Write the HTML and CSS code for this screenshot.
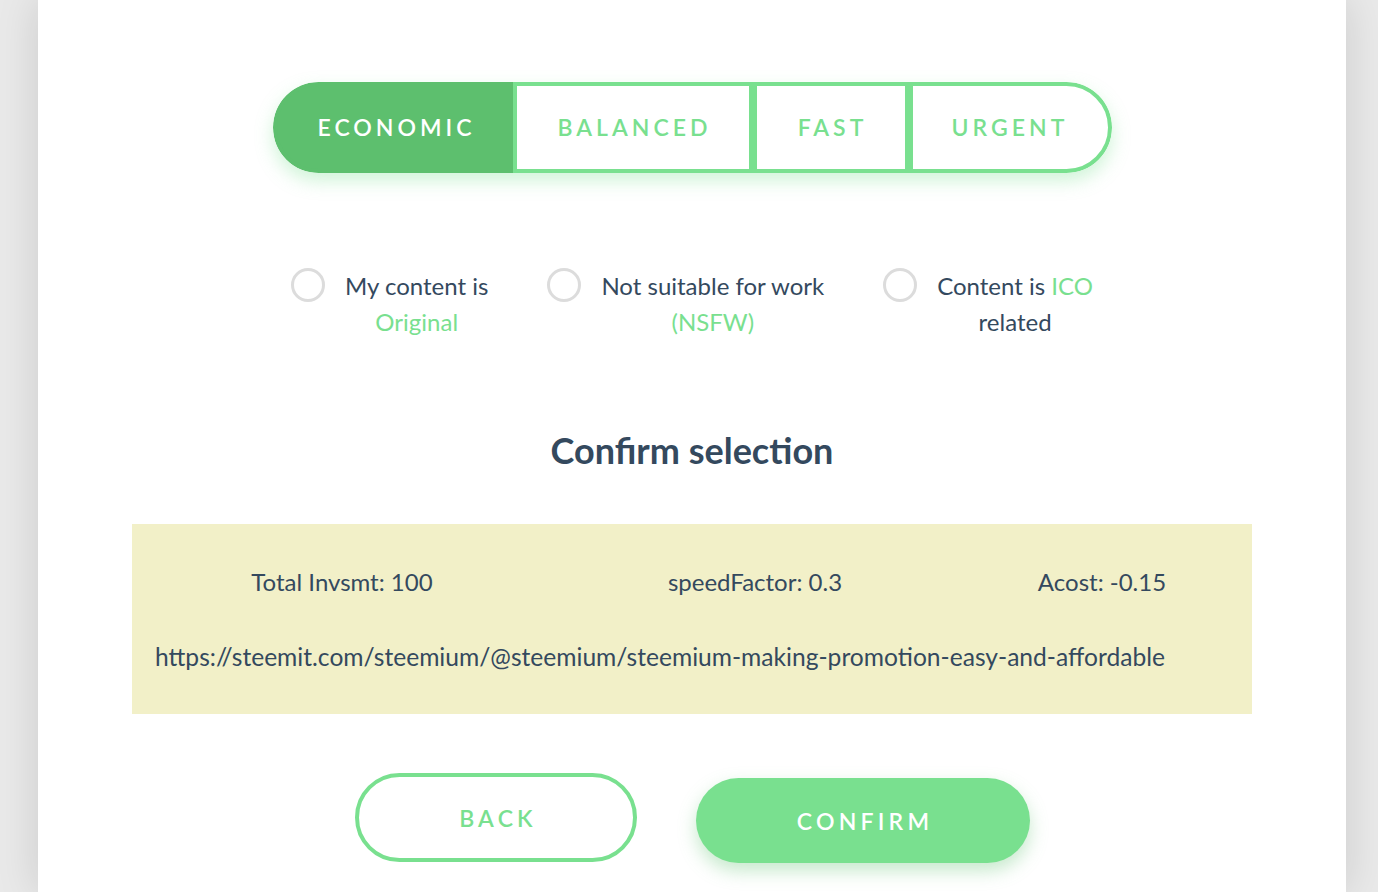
FILE: index.html
```html
<!DOCTYPE html>
<html>
<head>
<meta charset="utf-8">
<link rel="stylesheet" href="styles.css">
</head>
<body>
<div class="card">
  <div class="speed-row">
    <div class="speed">
      <div class="seg seg-economic active">ECONOMIC</div>
      <div class="seg seg-balanced">BALANCED</div>
      <div class="seg seg-fast">FAST</div>
      <div class="seg seg-urgent">URGENT</div>
    </div>
  </div>

  <div class="options">
    <div class="option">
      <span class="radio"></span>
      <div class="option-text">My content is<br><span class="hl">Original</span></div>
    </div>
    <div class="option">
      <span class="radio"></span>
      <div class="option-text">Not suitable for work<br><span class="hl">(NSFW)</span></div>
    </div>
    <div class="option">
      <span class="radio"></span>
      <div class="option-text">Content is <span class="hl">ICO</span><br>related</div>
    </div>
  </div>

  <h2 class="title">Confirm selection</h2>

  <div class="summary">
    <div class="summary-stats">
      <div class="stat">Total Invsmt: 100</div>
      <div class="stat">speedFactor: 0.3</div>
      <div class="stat">Acost: -0.15</div>
    </div>
    <div class="summary-url">https://steemit.com/steemium/@steemium/steemium-making-promotion-easy-and-affordable</div>
  </div>

  <div class="actions">
    <button class="btn btn-back">BACK</button>
    <button class="btn btn-confirm">CONFIRM</button>
  </div>
</div>
</body>
</html>
```

FILE: styles.css
```css
html, body {
  margin: 0;
  padding: 0;
}
body {
  background: #e9e9e9;
  font-family: "Lato", "Noto Sans", sans-serif;
  color: #34495e;
  overflow: hidden;
}
.card {
  margin-left: 38px;
  width: 1308px;
  min-height: 892px;
  background: #ffffff;
  box-shadow: 0 0 40px rgba(0, 0, 0, 0.13);
  padding-top: 82px;
  box-sizing: border-box;
}
.speed-row {
  display: flex;
  justify-content: center;
}
.speed {
  display: flex;
  height: 91px;
  border-radius: 46px;
  overflow: hidden;
  box-shadow: 0 8px 18px rgba(121, 224, 143, 0.35);
}
.seg {
  box-sizing: border-box;
  height: 91px;
  border: 4px solid #79e08f;
  display: flex;
  align-items: center;
  justify-content: center;
  font-size: 23px;
  font-weight: 600;
  letter-spacing: 4px;
  color: #79e08f;
  padding-left: 4px;
  padding-bottom: 2px;
  background: #fff;
}
.seg.active {
  background: #5dbf6e;
  border-color: #5dbf6e;
  color: #fff;
}
.seg-economic { width: 240px; border-radius: 46px 0 0 46px; padding-left: 8px; }
.seg-balanced { width: 240px; }
.seg-fast { width: 156px; }
.seg-urgent { width: 203px; border-radius: 0 46px 46px 0; padding-right: 4px; }

.options {
  display: flex;
  justify-content: center;
  gap: 59px;
  margin-top: 95px;
}
.option {
  display: flex;
  align-items: flex-start;
  gap: 20px;
}
.radio {
  width: 34px;
  height: 34px;
  box-sizing: border-box;
  border: 3px solid #dcdcdc;
  border-radius: 50%;
  flex: none;
}
.option-text {
  font-size: 24px;
  line-height: 36px;
  text-align: center;
  color: #34495e;
}
.hl {
  color: #79e08f;
}

.title {
  margin: 88px 0 0;
  font-size: 36px;
  line-height: 44px;
  font-weight: 700;
  text-align: center;
  color: #34495e;
}

.summary {
  width: 1120px;
  margin: 52px auto 0;
  background: #f2f0c8;
  box-sizing: border-box;
  padding: 40px 23px 39px;
}
.summary-stats {
  display: grid;
  grid-template-columns: 420px 406px 288px;
  margin-left: -23px;
}
.stat {
  font-size: 24px;
  line-height: 36px;
  text-align: center;
}
.summary-url {
  margin-top: 39px;
  font-size: 24.6px;
  line-height: 36px;
  white-space: nowrap;
}

.actions {
  display: flex;
  justify-content: center;
  align-items: flex-end;
  gap: 59px;
  margin-top: 59px;
}
.btn {
  font-family: "Lato", "Noto Sans", sans-serif;
  font-size: 23px;
  font-weight: 600;
  letter-spacing: 4.2px;
  border-radius: 46px;
  box-sizing: border-box;
  cursor: pointer;
  padding: 0 0 0 5px;
}
.btn-back {
  width: 282px;
  height: 89px;
  background: #fff;
  border: 4px solid #79e08f;
  color: #79e08f;
}
.btn-confirm {
  width: 334px;
  height: 85px;
  background: #79e08f;
  border: none;
  color: #fff;
  box-shadow: 0 8px 18px rgba(93, 191, 110, 0.35);
  margin-bottom: -1px;
}
```
